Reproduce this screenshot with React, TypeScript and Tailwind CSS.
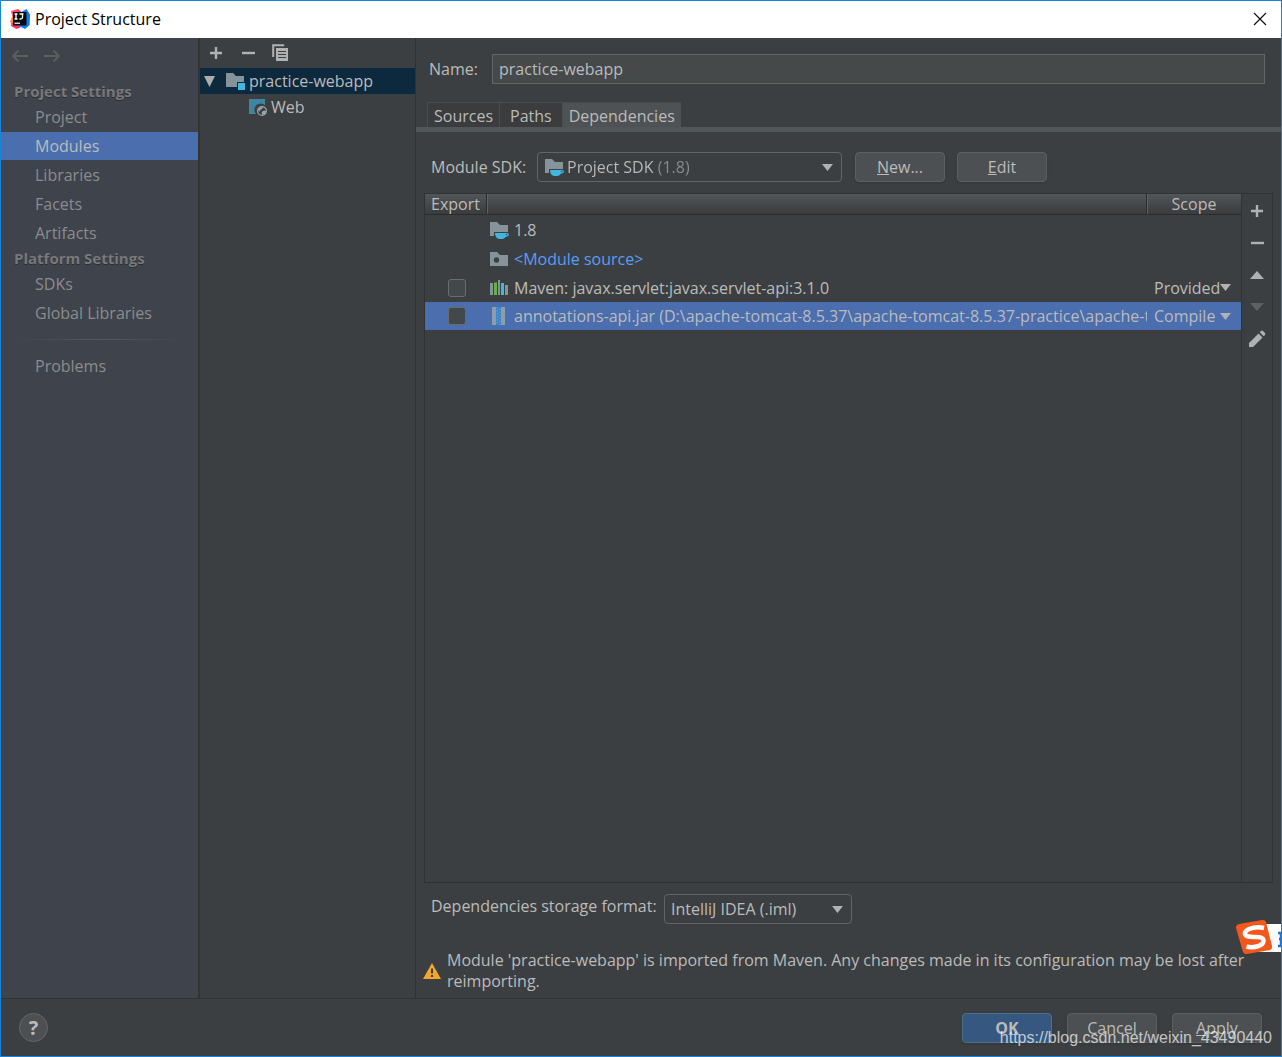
import { useState, type ReactNode } from 'react';

const projectItems = ['Project', 'Modules', 'Libraries', 'Facets', 'Artifacts'];
const platformItems = ['SDKs', 'Global Libraries'];
const tabs = ['Sources', 'Paths', 'Dependencies'];

/* ---------- icons ---------- */

function IdeaLogo() {
  return (
    <svg width="20" height="20" viewBox="0 0 20 20" aria-hidden="true">
      <path d="M1 2 8 0l4 3-6 12-5-3 1.500-4z" fill="#fc4a64" />
      <path d="M0 12.500 2.500 7 6 12v5l-4-1z" fill="#fc8a2c" />
      <path d="M1.500 14h7l2 4.500-4 1.500-5.500-3z" fill="#f0356a" />
      <path d="M12 2.500 16.500 0 20 5.500l-.3 10.500L15 20l-6-3z" fill="#087cfa" />
      <rect x="3" y="3" width="13.500" height="13.500" fill="#0b0b0b" />
      <path d="M4.500 5h3M6 5v5M4.500 10h3M9.500 5h4M12.500 5v3.500q0 1.500-2 1.500h-1" stroke="#fff" strokeWidth="1.300" fill="none" />
      <path d="M4.500 14.200h5.500" stroke="#fff" strokeWidth="1.200" />
    </svg>
  );
}

function CloseIcon() {
  return (
    <svg width="14" height="14" viewBox="0 0 14 14" aria-hidden="true">
      <path d="m1 1 12 12M13 1 1 13" stroke="#111" strokeWidth="1.200" />
    </svg>
  );
}

function ArrowIcon({ flip = false }: { flip?: boolean }) {
  return (
    <svg width="18" height="14" viewBox="0 0 18 14" className={flip ? 'rotate-180' : ''} aria-hidden="true">
      <path d="M17 7H2M7.500 1.500 2 7l5.500 5.500" stroke="#5c5e60" strokeWidth="1.800" fill="none" />
    </svg>
  );
}

function PlusIcon() {
  return (
    <svg width="14" height="14" viewBox="0 0 14 14" aria-hidden="true">
      <path d="M7 1v12M1 7h12" stroke="#afb1b3" strokeWidth="2.400" />
    </svg>
  );
}

function MinusIcon() {
  return (
    <svg width="14" height="14" viewBox="0 0 14 14" aria-hidden="true">
      <path d="M1 7h13" stroke="#afb1b3" strokeWidth="2.400" />
    </svg>
  );
}

function CopyIcon() {
  return (
    <svg width="16" height="18" viewBox="0 0 16 18" aria-hidden="true">
      <path d="M1.200 13V1.200h11" stroke="#afb1b3" strokeWidth="2" fill="none" />
      <rect x="4" y="4" width="12" height="13" fill="#afb1b3" />
      <path d="M6 7.500h8M6 10.500h8M6 13.500h8" stroke="#3c3f41" strokeWidth="1.200" />
    </svg>
  );
}

function Triangle({ up = false, dim = false, small = false }: { up?: boolean; dim?: boolean; small?: boolean }) {
  return (
    <svg
      width={small ? 11 : 14}
      height={small ? 7 : 8}
      viewBox="0 0 14 8"
      preserveAspectRatio="none"
      className={up ? 'rotate-180' : ''}
      aria-hidden="true"
    >
      <path d="M0 0h14L7 8z" fill={dim ? '#5e6062' : '#afb1b3'} />
    </svg>
  );
}

function PencilIcon() {
  return (
    <svg width="18" height="18" viewBox="0 0 18 18" aria-hidden="true">
      <path d="M1 13 10.500 3.500l4 4L5 17H1zM11.800 2.300 13 1q1-.8 2 0l2 2q.8 1 0 2l-1.300 1.300z" fill="#afb1b3" />
    </svg>
  );
}

function ModuleFolderIcon() {
  return (
    <svg width="20" height="18" viewBox="0 0 20 18" aria-hidden="true">
      <path d="M0 1h7l3 3h8v6h-7v5H0z" fill="#87939a" />
      <path d="M12 11h7v7h-7z" fill="#40b6e0" />
    </svg>
  );
}

function WebIcon() {
  return (
    <svg width="18" height="18" viewBox="0 0 18 18" aria-hidden="true">
      <path d="M0 1h16v6.500A6 6 0 0 0 7 16H0z" fill="#3e86a0" />
      <circle cx="13" cy="13" r="4.400" fill="#3c3f41" stroke="#9aa7b0" strokeWidth="1.200" />
      <path d="M9 11.500q2-3 5-2.500l-1 2-2 1-.5 2zM12.500 14l2.500-1.500 2 .5-1 3-2.500 1z" fill="#9aa7b0" />
    </svg>
  );
}

function SdkIcon() {
  return (
    <svg width="20" height="18" viewBox="0 0 20 18" aria-hidden="true">
      <path d="M0 1h7l3 3h8v7H4v4H0z" fill="#87939a" />
      <path d="M5 12h11q3-.3 3 1.500T15.500 16q-1 2-3.500 2H9q-4-1-4-6z" fill="#40b6e0" />
      <path d="M15.800 13.200h1.700v1h-1.700z" fill="#3c3f41" />
    </svg>
  );
}

function SourceIcon() {
  return (
    <svg width="18" height="14" viewBox="0 0 18 14" aria-hidden="true">
      <path d="M0 0h7l3 3h8v11H0z" fill="#87939a" />
      <circle cx="6.500" cy="8" r="2.700" fill="#3c3f41" />
    </svg>
  );
}

function LibraryIcon() {
  return (
    <svg width="18" height="16" viewBox="0 0 18 16" aria-hidden="true">
      <path d="M0 3h3v12H0zM8 0h2v15H8zM15 5h3v10h-3z" fill="#87939a" />
      <path d="M4 2.500h3V15H4z" fill="#62b543" />
      <path d="M11 3h3v12h-3z" fill="#40b6e0" />
    </svg>
  );
}

function JarIcon() {
  return (
    <svg width="18" height="18" viewBox="0 0 18 18" aria-hidden="true">
      <path d="M2 0h4v18H2zM11 0h4v18h-4z" fill="#8f9dab" />
      <path d="M6 0h5v18H6z" fill="#3f7fc0" />
      <path d="M7.300 0v18M9.700 1.500V18" stroke="#45a4dc" strokeWidth="1.600" strokeDasharray="1.500 1.500" />
    </svg>
  );
}

function WarningIcon() {
  return (
    <svg width="18" height="16" viewBox="0 0 18 16" aria-hidden="true">
      <path d="M9 0 18 16H0z" fill="#f0a732" />
      <path d="M8 5.500h2v5H8zM8 12h2v2H8z" fill="#3c3f41" />
    </svg>
  );
}

function ImeBadge() {
  return (
    <svg width="46" height="38" viewBox="0 0 46 38" aria-hidden="true">
      <path d="M20 5h26v28H20z" fill="#fff" />
      <path d="m3 5 23-4q3-.5 4 2l6 24q.5 3-2 4L11 35q-3 .5-4-2L0 9q-.5-3 3-4z" fill="#f4571b" />
      <path
        d="M28 9q-8-2-15 1-5 2.500-4 5.500 1.500 2.500 9 2.500 9-.5 9.500 3 .5 4-5 6-6 2-12 .5"
        stroke="#fff"
        strokeWidth="4.500"
        fill="none"
      />
      <path d="M42 14h4M45 14v12M43 20h3M42 27h4" stroke="#2173c9" strokeWidth="2.500" />
    </svg>
  );
}

/* ---------- small parts ---------- */

function IconButton({ label, children }: { label: string; children: ReactNode }) {
  return (
    <button aria-label={label} className="flex h-5 w-5 items-center justify-center">
      {children}
    </button>
  );
}

function PushButton({ primary = false, children }: { primary?: boolean; children: ReactNode }) {
  return (
    <button
      className={`h-[30px] w-[90px] rounded-[4px] border shadow-sm ${
        primary ? 'border-[#4c708c] bg-[#365880] font-bold' : 'border-[#5e6060] bg-[#4c5052]'
      }`}
    >
      {children}
    </button>
  );
}

function SideItem({ label, active, onSelect }: { label: string; active: boolean; onSelect: () => void }) {
  return (
    <button
      onClick={onSelect}
      className={`h-7 w-full pl-[34px] text-left ${active ? 'bg-[#4b6eaf] text-[#bbbbbb]' : 'text-[#8c8c8c]'}`}
    >
      {label}
    </button>
  );
}

function SideHeading({ children }: { children: ReactNode }) {
  return (
    <h2 className="h-[23px] pl-[13px] text-[15px] leading-[23px] font-bold text-[#787878] [text-shadow:0_1px_0_#2b2e35]">
      {children}
    </h2>
  );
}

function ScopeSelect({ value }: { value: string }) {
  return (
    <div className="relative flex h-7 items-center pl-[7px]">
      <select aria-label="Scope" defaultValue={value} className="h-7 w-full appearance-none outline-none">
        <option>Compile</option>
        <option>Test</option>
        <option>Runtime</option>
        <option>Provided</option>
      </select>
      <span className="pointer-events-none absolute right-[10px]">
        <Triangle small />
      </span>
    </div>
  );
}

function ExportBox({ label }: { label: string }) {
  return (
    <input
      type="checkbox"
      aria-label={label}
      className="block h-[18px] w-[18px] appearance-none rounded-[3px] border border-[#6b6b6b] bg-[#43494a] checked:bg-[#87939a]"
    />
  );
}

/* ---------- window ---------- */

export default function App() {
  const [section, setSection] = useState('Modules');
  const [tab, setTab] = useState('Dependencies');

  return (
    <div className="relative flex min-h-screen flex-col overflow-hidden border border-[#1883d7] bg-[#3c3f41] font-['Open_Sans','Noto_Sans_CJK_SC',sans-serif] text-base leading-5 text-[#bbbbbb]">
      {/* title bar */}
      <header className="flex h-[37px] items-center bg-white pr-[14px] pb-px pl-[9px] text-black">
        <IdeaLogo />
        <h1 className="ml-[5px] flex-1">Project Structure</h1>
        <button aria-label="Close">
          <CloseIcon />
        </button>
      </header>

      <div className="flex flex-1">
        {/* settings navigation */}
        <nav className="w-[199px] shrink-0 border-r-2 border-[#333333] bg-[#3e434c]">
          <div className="flex h-[42px] gap-[14px] pt-[11px] pl-[10px]">
            <button aria-label="Back" className="h-[14px]">
              <ArrowIcon />
            </button>
            <button aria-label="Forward" className="h-[14px]">
              <ArrowIcon flip />
            </button>
          </div>
          <SideHeading>Project Settings</SideHeading>
          <div className="flex flex-col gap-px">
            {projectItems.map((item) => (
              <SideItem key={item} label={item} active={section === item} onSelect={() => setSection(item)} />
            ))}
          </div>
          <SideHeading>Platform Settings</SideHeading>
          <div className="flex flex-col gap-px">
            {platformItems.map((item) => (
              <SideItem key={item} label={item} active={section === item} onSelect={() => setSection(item)} />
            ))}
          </div>
          <div className="mx-[10px] my-3 h-px bg-linear-to-r from-transparent via-[#55585c] to-transparent" />
          <SideItem label="Problems" active={section === 'Problems'} onSelect={() => setSection('Problems')} />
        </nav>

        {/* module tree */}
        <aside className="w-[216px] shrink-0 border-r border-[#323232]">
          <div className="flex h-[30px] items-center gap-3 pl-[6px]">
            <IconButton label="Add">
              <PlusIcon />
            </IconButton>
            <IconButton label="Remove">
              <MinusIcon />
            </IconButton>
            <IconButton label="Copy">
              <CopyIcon />
            </IconButton>
          </div>
          <ul>
            <li>
              <div className="flex h-[26px] items-center bg-[#0d293e] pl-1">
                <svg width="11" height="11" viewBox="0 0 11 11" aria-hidden="true">
                  <path d="M0 0h11L5.500 11z" fill="#adadad" />
                </svg>
                <span className="mr-[3px] ml-[11px]">
                  <ModuleFolderIcon />
                </span>
                practice-webapp
              </div>
              <ul>
                <li className="flex h-[26px] items-center gap-1 pl-[49px]">
                  <WebIcon />
                  Web
                </li>
              </ul>
            </li>
          </ul>
        </aside>

        {/* module editor */}
        <main className="flex min-w-0 flex-1 flex-col">
          <div className="flex items-center px-4 pt-4 pl-[13px]">
            <label htmlFor="module-name" className="w-[63px]">
              Name:
            </label>
            <input
              id="module-name"
              defaultValue="practice-webapp"
              className="h-[30px] min-w-0 flex-1 border border-[#646464] bg-[#45494a] px-[6px] outline-none"
            />
          </div>

          <div role="tablist" className="mt-[18px] flex border-b-[5px] border-[#515658] pl-[11px]">
            {tabs.map((name) => (
              <button
                key={name}
                role="tab"
                aria-selected={tab === name}
                onClick={() => setTab(name)}
                className={`h-[25px] border-t border-l border-[#4a4d4f] pt-[2px] ${
                  tab === name ? 'bg-[#4e5254]' : 'bg-[#3a3c3d]'
                } ${name === 'Paths' ? 'px-[10px]' : 'px-[6px]'}`}
              >
                {name}
              </button>
            ))}
          </div>

          <div className="mt-5 flex items-center pl-[15px]">
            <label htmlFor="module-sdk" className="w-[106px]">
              Module SDK:
            </label>
            <div className="flex h-[30px] w-[305px] items-center rounded-[4px] border border-[#646464] pr-2 pl-[7px]">
              <SdkIcon />
              <select
                id="module-sdk"
                className="h-7 flex-1 appearance-none bg-[linear-gradient(to_right,#bbbbbb_0_90px,#8c8c8c_90px)] bg-clip-text pl-[2px] text-transparent outline-none"
              >
                <option className="text-black">Project SDK (1.8)</option>
              </select>
              <Triangle small />
            </div>
            <div className="ml-[13px] flex gap-3">
              <PushButton>
                <u>N</u>ew...
              </PushButton>
              <PushButton>
                <u>E</u>dit
              </PushButton>
            </div>
          </div>

          <div className="mt-[11px] mr-2 ml-2 flex flex-1 border border-[#323232]">
            <div className="min-w-0 flex-1">
              <table className="w-full table-fixed border-separate border-spacing-0 text-left">
                <colgroup>
                  <col className="w-[62px]" />
                  <col />
                  <col className="w-[94px]" />
                </colgroup>
                <thead>
                  <tr className="bg-linear-to-b from-[#515658] to-[#393b3d] leading-5">
                    <th className="border-r border-b border-[#2b2b2b] p-0 pl-[6px] font-normal">Export</th>
                    <th
                      className="border-r border-b border-[#2b2b2b] p-0 shadow-[inset_1px_0_0_#5f6365]"
                      aria-label="Library"
                    />
                    <th className="border-b border-[#2b2b2b] p-0 text-center font-normal shadow-[inset_1px_0_0_#5f6365]">
                      Scope
                    </th>
                  </tr>
                </thead>
                <tbody>
                  <tr className="h-[29px]">
                    <td className="p-0" />
                    <td className="p-0">
                      <div className="flex items-center gap-1 pl-[3px]">
                        <SdkIcon />
                        1.8
                      </div>
                    </td>
                    <td className="p-0" />
                  </tr>
                  <tr className="h-[29px]">
                    <td className="p-0" />
                    <td className="p-0">
                      <div className="flex items-center gap-[6px] pl-[3px] text-[#589df6]">
                        <SourceIcon />
                        &lt;Module source&gt;
                      </div>
                    </td>
                    <td className="p-0" />
                  </tr>
                  <tr className="h-[29px]">
                    <td className="p-0 pl-[23px]">
                      <ExportBox label="Export javax.servlet-api" />
                    </td>
                    <td className="p-0">
                      <div className="flex items-center gap-[6px] pl-[3px]">
                        <LibraryIcon />
                        Maven: javax.servlet:javax.servlet-api:3.1.0
                      </div>
                    </td>
                    <td className="p-0">
                      <ScopeSelect value="Provided" />
                    </td>
                  </tr>
                  <tr className="h-7 bg-[#4b6eaf]">
                    <td className="p-0 pl-[23px]">
                      <ExportBox label="Export annotations-api.jar" />
                    </td>
                    <td className="p-0">
                      <div className="flex items-center gap-[6px] overflow-hidden pl-[3px] whitespace-nowrap">
                        <span className="shrink-0">
                          <JarIcon />
                        </span>
                        annotations-api.jar (D:\apache-tomcat-8.5.37\apache-tomcat-8.5.37-practice\apache-tomcat-8.5.37\lib)
                      </div>
                    </td>
                    <td className="p-0">
                      <ScopeSelect value="Compile" />
                    </td>
                  </tr>
                </tbody>
              </table>
            </div>
            <div className="flex w-[31px] flex-col items-center gap-3 border-l border-[#323232] pt-[7px]">
              <IconButton label="Add dependency">
                <PlusIcon />
              </IconButton>
              <IconButton label="Remove dependency">
                <MinusIcon />
              </IconButton>
              <IconButton label="Move up">
                <Triangle up />
              </IconButton>
              <IconButton label="Move down">
                <Triangle dim />
              </IconButton>
              <IconButton label="Edit dependency">
                <PencilIcon />
              </IconButton>
            </div>
          </div>

          <div className="mt-[11px] flex items-start pl-[15px]">
            <label htmlFor="storage-format" className="w-[233px] leading-6">
              Dependencies storage format:
            </label>
            <div className="flex h-[30px] w-[188px] items-center rounded-[4px] border border-[#646464] pr-2 pl-[6px]">
              <select id="storage-format" className="h-7 min-w-0 flex-1 appearance-none outline-none">
                <option>IntelliJ IDEA (.iml)</option>
                <option>Eclipse (.classpath)</option>
              </select>
              <Triangle small />
            </div>
          </div>

          <div className="mt-[26px] mb-[6px] flex items-center gap-[6px] pr-5 pl-[7px]">
            <span className="shrink-0">
              <WarningIcon />
            </span>
            <p className="leading-[21px]">
              Module 'practice-webapp' is imported from Maven. Any changes made in its configuration may be lost after
              reimporting.
            </p>
          </div>
        </main>
      </div>

      {/* dialog buttons */}
      <footer className="flex h-[58px] items-center border-t border-[#323232] pr-[19px] pl-[18px]">
        <button
          aria-label="Help"
          className="flex h-[29px] w-[29px] items-center justify-center rounded-full border border-[#646769] bg-[#4c5052] text-xl font-bold"
        >
          ?
        </button>
        <div className="ml-auto flex gap-[15px]">
          <PushButton primary>OK</PushButton>
          <PushButton>Cancel</PushButton>
          <PushButton>
            <u>A</u>pply
          </PushButton>
        </div>
      </footer>

      {/* floating input-method badge and watermark */}
      <div className="absolute right-[-1px] bottom-[99px]">
        <ImeBadge />
      </div>
      <div className="pointer-events-none absolute right-[9px] bottom-2 font-['Liberation_Sans',sans-serif] text-base leading-5 text-white/70">
        https://blog.csdn.net/weixin_43490440
      </div>
    </div>
  );
}
